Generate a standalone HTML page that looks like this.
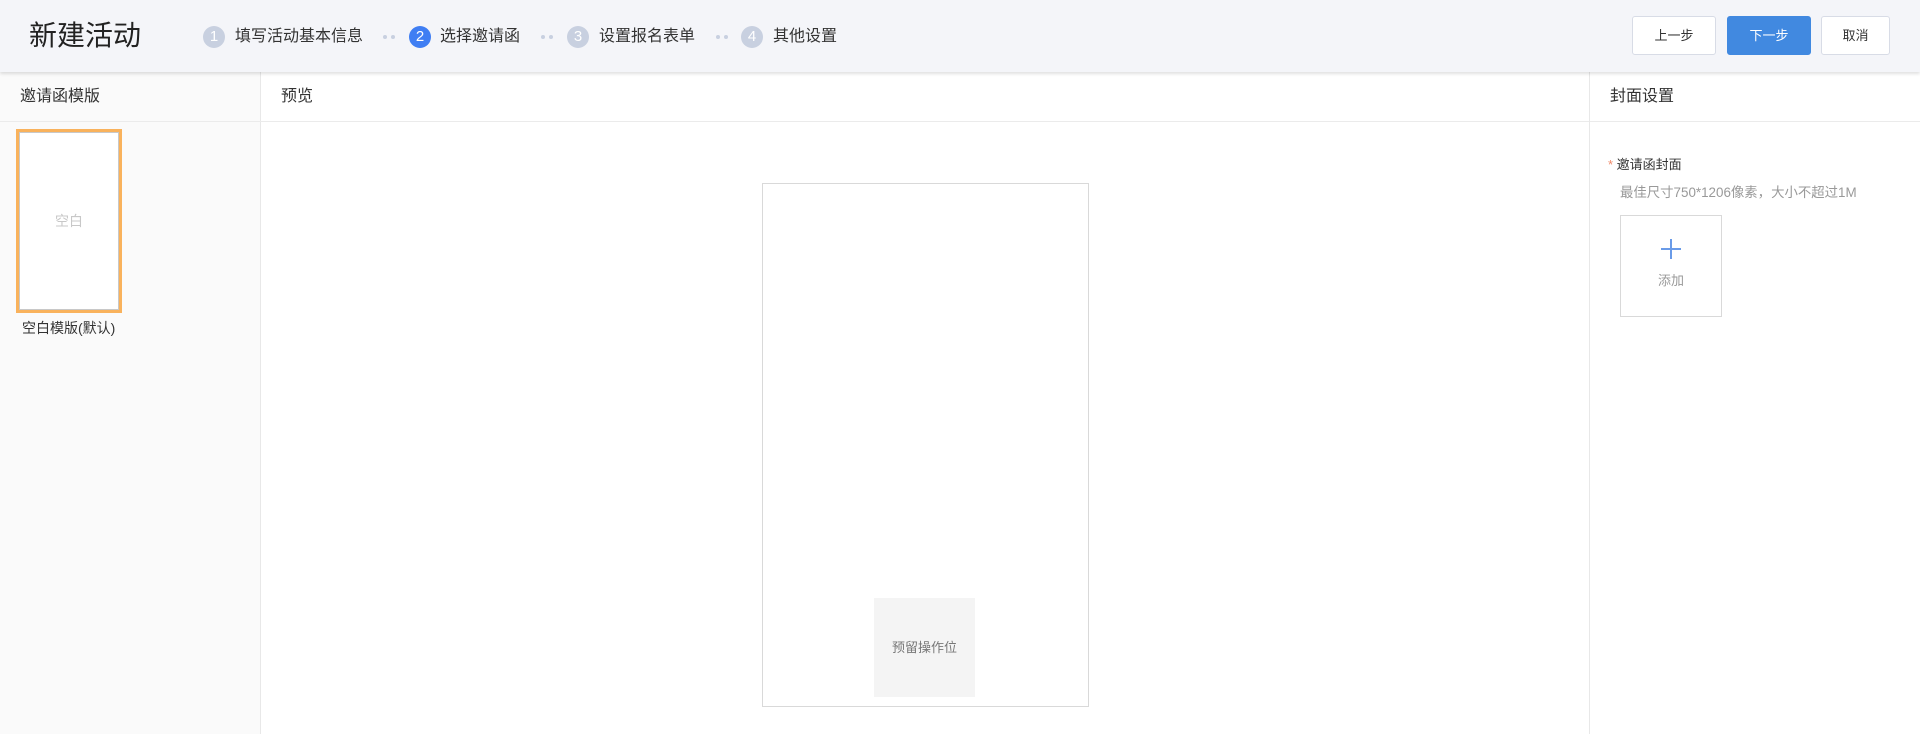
<!DOCTYPE html>
<html><head><meta charset="utf-8"><style>
*{margin:0;padding:0;box-sizing:border-box}
body{width:1920px;height:734px;overflow:hidden;background:#fff;font-family:"Liberation Sans","Noto Sans CJK SC",sans-serif;color:#333;position:relative}
.hdr{position:absolute;left:0;top:0;width:1920px;height:72px;background:#f4f5f9;box-shadow:0 2px 3px rgba(0,0,0,.12);z-index:2}
.t{position:absolute;left:29px;top:18px;font-size:28px;line-height:36px;color:#222}
.c{position:absolute;top:26px;width:22px;height:22px;border-radius:50%;background:#c8d0e0;color:#fff;font-size:15px;line-height:22px;text-align:center}
.c.a{background:#3f7ef3}
.s{position:absolute;top:26px;font-size:16px;line-height:22px;color:#333}
.d{position:absolute;top:35px;width:4px;height:4px;border-radius:50%;background:#c8d0e0;box-shadow:8px 0 0 #c8d0e0}
.b{position:absolute;top:16px;height:39px;border:1px solid #d8dce6;border-radius:3px;background:#fff;font-size:13px;line-height:37px;text-align:center;color:#333}
.left{position:absolute;left:0;top:72px;width:261px;height:662px;background:#fafafa;border-right:1px solid #e8e8e8}
.ph{position:absolute;top:72px;height:50px;border-bottom:1px solid #ebebeb;font-size:16px;line-height:50px}
.right{position:absolute;left:1589px;top:72px;width:1px;height:662px;background:#e8e8e8}
</style></head><body>
<div class="hdr">
<div class="t">新建活动</div>
<div class="c" style="left:203px">1</div><div class="s" style="left:235px">填写活动基本信息</div>
<div class="d" style="left:383px"></div>
<div class="c a" style="left:409px">2</div><div class="s" style="left:440px">选择邀请函</div>
<div class="d" style="left:541px"></div>
<div class="c" style="left:567px">3</div><div class="s" style="left:599px">设置报名表单</div>
<div class="d" style="left:716px"></div>
<div class="c" style="left:741px">4</div><div class="s" style="left:773px">其他设置</div>
<div class="b" style="left:1632px;width:84px">上一步</div>
<div class="b" style="left:1727px;width:84px;background:#4189e0;border-color:#4189e0;color:#fff">下一步</div>
<div class="b" style="left:1821px;width:69px">取消</div>
</div>
<div class="left"></div>
<div class="ph" style="left:0;width:261px;padding-left:20px">邀请函模版</div>
<div class="ph" style="left:261px;width:1328px;padding-left:20px">预览</div>
<div class="ph" style="left:1590px;width:330px;padding-left:20px">封面设置</div>
<div class="right"></div>
<div style="position:absolute;left:16px;top:129px;width:106px;height:184px;border:3px solid #f9b25c;background:#fff;box-shadow:inset 0 0 0 1px #c8c8c8;font-size:14px;color:#c8c8c8;text-align:center;line-height:178px">空白</div>
<div style="position:absolute;left:22px;top:319px;font-size:14px;line-height:19px;color:#333">空白模版(默认)</div>
<div style="position:absolute;left:762px;top:183px;width:327px;height:524px;border:1px solid #d9d9d9"></div>
<div style="position:absolute;left:874px;top:598px;width:101px;height:99px;background:#f4f4f4;font-size:13px;color:#777;text-align:center;line-height:99px">预留操作位</div>
<div style="position:absolute;left:1608px;top:156px;font-size:13px;line-height:18px"><span style="color:#f08a6a">*</span> 邀请函封面</div>
<div style="position:absolute;left:1620px;top:184px;font-size:13.4px;line-height:18px;color:#999">最佳尺寸750*1206像素，大小不超过1M</div>
<div style="position:absolute;left:1620px;top:215px;width:102px;height:102px;border:1px solid #d9d9d9;background:#fff">
<div style="position:absolute;left:40px;top:32px;width:20px;height:2px;background:#6a9be8"></div>
<div style="position:absolute;left:49px;top:23px;width:2px;height:20px;background:#6a9be8"></div>
<div style="position:absolute;left:0;top:54px;width:100px;text-align:center;font-size:13px;color:#999">添加</div>
</div>
</body></html>
